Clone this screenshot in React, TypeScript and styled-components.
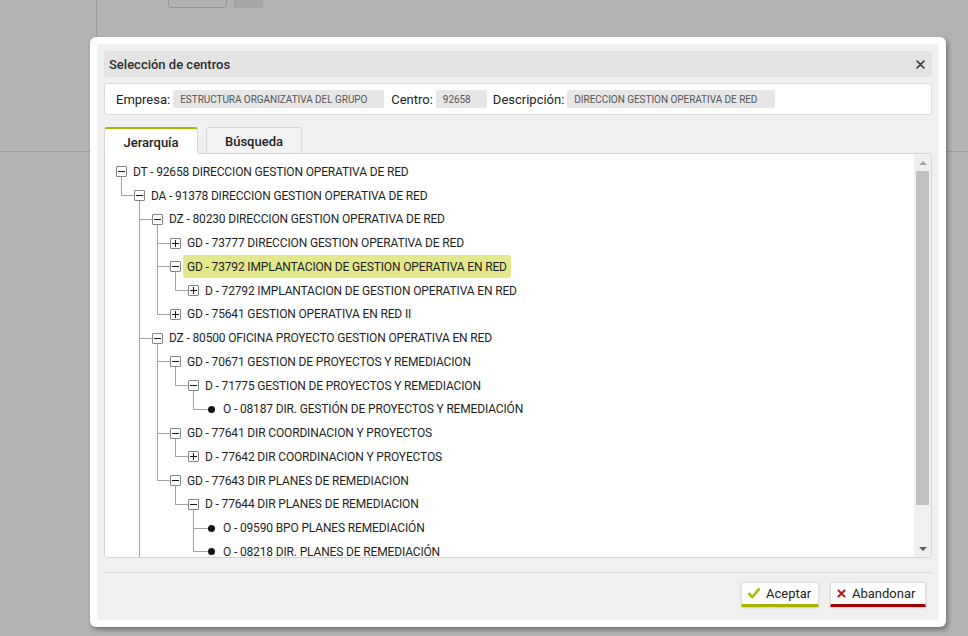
import React from "react";
import styled, { createGlobalStyle, css } from "styled-components";

const GlobalStyle = createGlobalStyle`
  html, body { margin: 0; padding: 0; }
  body {
    background: #b3b3b3;
    font-family: Roboto, "Noto Sans", sans-serif;
    color: #222;
    overflow: hidden;
  }
`;

/* ---------- page behind the overlay ---------- */
const Page = styled.div`
  height: 636px;
  display: flex;
  flex-direction: column;
`;
const PageHeader = styled.div`
  height: 151px;
  display: flex;
  border-bottom: 1px solid #9d9d9d;
`;
const SideColumn = styled.div`
  width: 96px;
  border-right: 1px solid #9d9d9d;
`;
const HeaderTools = styled.div`
  display: flex;
  align-items: flex-end;
  gap: 8px;
  height: 8px;
  padding-left: 71px;
  overflow: hidden;
`;
const GhostInput = styled.div`
  width: 57px;
  height: 22px;
  border: 1px solid #979797;
  border-radius: 3px;
`;
const GhostButton = styled.div`
  width: 28px;
  height: 20px;
  background: #a6a6a6;
  border-radius: 3px;
  box-shadow: 0 1px 2px rgba(0, 0, 0, 0.25);
`;

/* ---------- dialog ---------- */
const Dialog = styled.div`
  position: fixed;
  left: 90px;
  top: 37px;
  width: 856px;
  height: 590px;
  box-sizing: border-box;
  padding: 7px;
  background: #fff;
  border-radius: 6px;
  box-shadow: 2px 3px 5px rgba(0, 0, 0, 0.35);
`;
const DialogBody = styled.div`
  height: 100%;
  box-sizing: border-box;
  padding: 7px;
  background: #f0f0f0;
  border-radius: 4px;
  display: flex;
  flex-direction: column;
`;
const TitleBar = styled.div`
  height: 26px;
  flex: none;
  display: flex;
  align-items: center;
  justify-content: space-between;
  padding: 0 7px 0 5px;
  background: #e4e4e4;
  border-radius: 4px;
  font-size: 13px;
  font-weight: 500;
  color: #2e2e2e;
`;
const CloseButton = styled.button`
  border: 0;
  background: none;
  padding: 0;
  width: 10px;
  height: 10px;
  display: flex;
  align-items: center;
  justify-content: center;
  cursor: pointer;
`;

const FilterBar = styled.div`
  margin-top: 6px;
  height: 32px;
  flex: none;
  box-sizing: border-box;
  display: flex;
  align-items: center;
  padding: 0 11px;
  background: #fff;
  border: 1px solid #dcdcdc;
  border-radius: 3px;
`;
const FieldLabel = styled.span<{ $gap?: number }>`
  font-size: 13px;
  color: #222;
  margin-left: ${(p) => p.$gap ?? 0}px;
  margin-right: 3px;
  white-space: nowrap;
`;
const FieldValue = styled.span<{ $w: number }>`
  width: ${(p) => p.$w}px;
  height: 18px;
  box-sizing: border-box;
  display: flex;
  align-items: center;
  padding-left: 7px;
  background: #e6e6e6;
  border-radius: 2px;
  font-size: 10px;
  letter-spacing: -0.05px;
  color: #555;
  white-space: nowrap;
  overflow: hidden;
`;

const TabStrip = styled.div`
  margin-top: 12px;
  height: 26px;
  flex: none;
  display: flex;
  gap: 8px;
  align-items: flex-end;
`;
const Tab = styled.div<{ $active?: boolean; $w: number }>`
  width: ${(p) => p.$w}px;
  height: 26px;
  box-sizing: border-box;
  display: flex;
  align-items: center;
  justify-content: center;
  padding-top: 2px;
  font-size: 13px;
  font-weight: 500;
  color: #222;
  border: 1px solid #d8d8d8;
  border-bottom: 0;
  border-radius: 3px 3px 0 0;
  background: #f2f2f2;
  ${(p) =>
    p.$active &&
    css`
      position: relative;
      z-index: 1;
      height: 27px;
      margin-bottom: -1px;
      background: #fff;
      border-top: 2px solid #a8b400;
      padding-top: 1px;
    `}
`;

const TreePanel = styled.div`
  height: 405px;
  flex: none;
  box-sizing: border-box;
  display: flex;
  background: #fff;
  border: 1px solid #d6d6d6;
  border-radius: 0 3px 3px 3px;
  overflow: hidden;
`;
const TreeViewport = styled.div`
  flex: 1;
  overflow: hidden;
  padding: 6px 0 0 7px;
`;

/* ---------- scrollbar ---------- */
const ScrollBar = styled.div`
  width: 17px;
  flex: none;
  display: flex;
  flex-direction: column;
  background: #f0f0f0;
`;
const ScrollArrow = styled.div<{ $down?: boolean }>`
  height: 17px;
  flex: none;
  display: flex;
  align-items: center;
  justify-content: center;
  &::after {
    content: "";
    width: 0;
    height: 0;
    border-left: 4px solid transparent;
    border-right: 4px solid transparent;
    ${(p) =>
      p.$down
        ? css`border-top: 4px solid #5d5d5d;`
        : css`border-bottom: 4px solid #a6a6a6;`}
  }
`;
const ScrollTrack = styled.div`
  flex: 1;
  padding: 0 2px;
`;
const ScrollThumb = styled.div`
  height: 334px;
  background: #c1c1c1;
`;

/* ---------- tree ---------- */
const LINE = "#a3a3a3";
const ROW_H = 23.75;

const TreeRow = styled.div`
  height: ${ROW_H}px;
  display: flex;
  align-items: center;
  white-space: nowrap;
`;
const Guide = styled.span<{ $kind: "none" | "pass" | "tee" | "end" }>`
  width: 18px;
  height: 100%;
  flex: none;
  background-repeat: no-repeat;
  ${(p) =>
    p.$kind === "pass" &&
    css`
      background-image: linear-gradient(${LINE}, ${LINE});
      background-size: 1px 100%;
      background-position: 9px 0;
    `}
  ${(p) =>
    p.$kind === "tee" &&
    css`
      background-image: linear-gradient(${LINE}, ${LINE}), linear-gradient(${LINE}, ${LINE});
      background-size: 1px 100%, 9px 1px;
      background-position: 9px 0, 9px 50%;
    `}
  ${(p) =>
    p.$kind === "end" &&
    css`
      background-image: linear-gradient(${LINE}, ${LINE}), linear-gradient(${LINE}, ${LINE});
      background-size: 1px 50%, 9px 1px;
      background-position: 9px 0, 9px 50%;
    `}
`;
const NodeCell = styled.span<{ $inLine: boolean; $stem: boolean }>`
  width: 18px;
  height: 100%;
  flex: none;
  display: flex;
  align-items: center;
  justify-content: center;
  background-repeat: no-repeat;
  background-image: ${(p) =>
    [
      p.$inLine ? `linear-gradient(${LINE}, ${LINE})` : null,
      p.$stem ? `linear-gradient(${LINE}, ${LINE})` : null,
    ]
      .filter(Boolean)
      .join(", ") || "none"};
  background-size: ${(p) =>
    [p.$inLine ? "9px 1px" : null, p.$stem ? "1px 50%" : null].filter(Boolean).join(", ") || "auto"};
  background-position: ${(p) =>
    [p.$inLine ? "0 50%" : null, p.$stem ? "9px 100%" : null].filter(Boolean).join(", ") || "0 0"};
`;
const Toggle = styled.span`
  width: 11px;
  height: 11px;
  box-sizing: border-box;
  margin-left: 1px;
  display: flex;
  align-items: center;
  justify-content: center;
  background: #fff;
  border: 1px solid #858585;
  border-radius: 1px;
`;
const Bullet = styled.span`
  width: 7px;
  height: 7px;
  margin-left: 1px;
  border-radius: 50%;
  background: #111;
`;
const NodeLabel = styled.span<{ $selected?: boolean }>`
  margin-left: -1px;
  padding: 0 4px;
  height: 23px;
  display: flex;
  align-items: center;
  font-size: 12px;
  letter-spacing: -0.15px;
  color: #1f1f1f;
  border-radius: 3px;
  ${(p) => p.$selected && css`background: #e2e88b;`}
`;

/* ---------- footer ---------- */
const Footer = styled.div`
  margin-top: 14px;
  padding: 9px 6px 0 0;
  border-top: 1px solid #d9d9d9;
  display: flex;
  justify-content: flex-end;
  gap: 11px;
`;
const ActionButton = styled.button<{ $accent: string; $w: number }>`
  width: ${(p) => p.$w}px;
  height: 25px;
  box-sizing: border-box;
  display: flex;
  align-items: center;
  gap: 6px;
  padding: 0 0 0 6px;
  background: #fff;
  border: 1px solid #dedede;
  border-bottom: 3px solid ${(p) => p.$accent};
  border-radius: 1px;
  box-shadow: 0 1px 2px rgba(0, 0, 0, 0.15);
  font-family: Roboto, "Noto Sans", sans-serif;
  font-size: 13px;
  font-weight: 400;
  color: #222;
  cursor: pointer;
`;

/* ---------- data ---------- */
type Node = {
  label: string;
  state: "open" | "closed" | "leaf";
  selected?: boolean;
  moreBelow?: boolean;
  children?: Node[];
};

const tree: Node = {
  label: "DT - 92658 DIRECCION GESTION OPERATIVA DE RED",
  state: "open",
  children: [
    {
      label: "DA - 91378 DIRECCION GESTION OPERATIVA DE RED",
      state: "open",
      children: [
        {
          label: "DZ - 80230 DIRECCION GESTION OPERATIVA DE RED",
          state: "open",
          children: [
            { label: "GD - 73777 DIRECCION GESTION OPERATIVA DE RED", state: "closed" },
            {
              label: "GD - 73792 IMPLANTACION DE GESTION OPERATIVA EN RED",
              state: "open",
              selected: true,
              children: [{ label: "D - 72792 IMPLANTACION DE GESTION OPERATIVA EN RED", state: "closed" }],
            },
            { label: "GD - 75641 GESTION OPERATIVA EN RED II", state: "closed" },
          ],
        },
        {
          label: "DZ - 80500 OFICINA PROYECTO GESTION OPERATIVA EN RED",
          state: "open",
          moreBelow: true,
          children: [
            {
              label: "GD - 70671 GESTION DE PROYECTOS Y REMEDIACION",
              state: "open",
              children: [
                {
                  label: "D - 71775 GESTION DE PROYECTOS Y REMEDIACION",
                  state: "open",
                  children: [{ label: "O - 08187 DIR. GESTIÓN DE PROYECTOS Y REMEDIACIÓN", state: "leaf" }],
                },
              ],
            },
            {
              label: "GD - 77641 DIR COORDINACION Y PROYECTOS",
              state: "open",
              children: [{ label: "D - 77642 DIR COORDINACION Y PROYECTOS", state: "closed" }],
            },
            {
              label: "GD - 77643 DIR PLANES DE REMEDIACION",
              state: "open",
              children: [
                {
                  label: "D - 77644 DIR PLANES DE REMEDIACION",
                  state: "open",
                  children: [
                    { label: "O - 09590 BPO PLANES REMEDIACIÓN", state: "leaf" },
                    { label: "O - 08218 DIR. PLANES DE REMEDIACIÓN", state: "leaf" },
                  ],
                },
              ],
            },
          ],
        },
      ],
    },
  ],
};

type FlatRow = { node: Node; level: number; guides: ("none" | "pass" | "tee" | "end")[] };

function flatten(node: Node, level: number, lastFlags: boolean[], out: FlatRow[]) {
  const guides = lastFlags.map((isLast, i) =>
    i === lastFlags.length - 1 ? (isLast ? "end" : "tee") : isLast ? "none" : "pass"
  ) as FlatRow["guides"];
  out.push({ node, level, guides });
  const kids = node.children ?? [];
  kids.forEach((k, i) => {
    const last = i === kids.length - 1 && !k.moreBelow;
    flatten(k, level + 1, [...lastFlags, last], out);
  });
  return out;
}

const rows = flatten(tree, 0, [], []);

function Minus() {
  return (
    <svg width="7" height="7" viewBox="0 0 7 7">
      <rect x="0" y="3" width="7" height="1" fill="#1a1a1a" />
    </svg>
  );
}
function Plus() {
  return (
    <svg width="7" height="7" viewBox="0 0 7 7">
      <rect x="0" y="3" width="7" height="1" fill="#1a1a1a" />
      <rect x="3" y="0" width="1" height="7" fill="#1a1a1a" />
    </svg>
  );
}

function TreeView() {
  return (
    <TreeViewport>
      {rows.map((r, idx) => {
        const hasKids = (r.node.children?.length ?? 0) > 0 && r.node.state === "open";
        return (
          <TreeRow key={idx}>
            {r.guides.map((g, i) => (
              <Guide key={i} $kind={g} />
            ))}
            <NodeCell $inLine={r.level > 0} $stem={hasKids}>
              {r.node.state === "leaf" ? (
                <Bullet />
              ) : (
                <Toggle>{r.node.state === "open" ? <Minus /> : <Plus />}</Toggle>
              )}
            </NodeCell>
            <NodeLabel $selected={r.node.selected}>{r.node.label}</NodeLabel>
          </TreeRow>
        );
      })}
    </TreeViewport>
  );
}

export default function App() {
  return (
    <>
      <GlobalStyle />
      <Page>
        <PageHeader>
          <SideColumn />
          <HeaderTools>
            <GhostInput />
            <GhostButton />
          </HeaderTools>
        </PageHeader>
      </Page>

      <Dialog>
        <DialogBody>
          <TitleBar>
            <span>Selección de centros</span>
            <CloseButton aria-label="Cerrar">
              <svg width="9" height="9" viewBox="0 0 9 9">
                <path d="M1 1 L8 8 M8 1 L1 8" stroke="#333" strokeWidth="1.6" strokeLinecap="round" />
              </svg>
            </CloseButton>
          </TitleBar>

          <FilterBar>
            <FieldLabel>Empresa:</FieldLabel>
            <FieldValue $w={211}>ESTRUCTURA ORGANIZATIVA DEL GRUPO</FieldValue>
            <FieldLabel $gap={7}>Centro:</FieldLabel>
            <FieldValue $w={51}>92658</FieldValue>
            <FieldLabel $gap={6}>Descripción:</FieldLabel>
            <FieldValue $w={208}>DIRECCION GESTION OPERATIVA DE RED</FieldValue>
          </FilterBar>

          <TabStrip>
            <Tab $active $w={94}>Jerarquía</Tab>
            <Tab $w={96}>Búsqueda</Tab>
          </TabStrip>

          <TreePanel>
            <TreeView />
            <ScrollBar>
              <ScrollArrow />
              <ScrollTrack>
                <ScrollThumb />
              </ScrollTrack>
              <ScrollArrow $down />
            </ScrollBar>
          </TreePanel>

          <Footer>
            <ActionButton $accent="#a8b400" $w={78}>
              <svg width="12" height="11" viewBox="0 0 12 11">
                <path d="M1.2 6 L4.3 9.2 L10.8 1.3" fill="none" stroke="#a9c000" strokeWidth="2.6" strokeLinecap="round" strokeLinejoin="round" />
              </svg>
              Aceptar
            </ActionButton>
            <ActionButton $accent="#a30000" $w={96}>
              <svg width="9" height="9" viewBox="0 0 9 9">
                <path d="M1.5 1.5 L7.5 7.5 M7.5 1.5 L1.5 7.5" stroke="#b3161c" strokeWidth="2" strokeLinecap="round" />
              </svg>
              Abandonar
            </ActionButton>
          </Footer>
        </DialogBody>
      </Dialog>
    </>
  );
}
